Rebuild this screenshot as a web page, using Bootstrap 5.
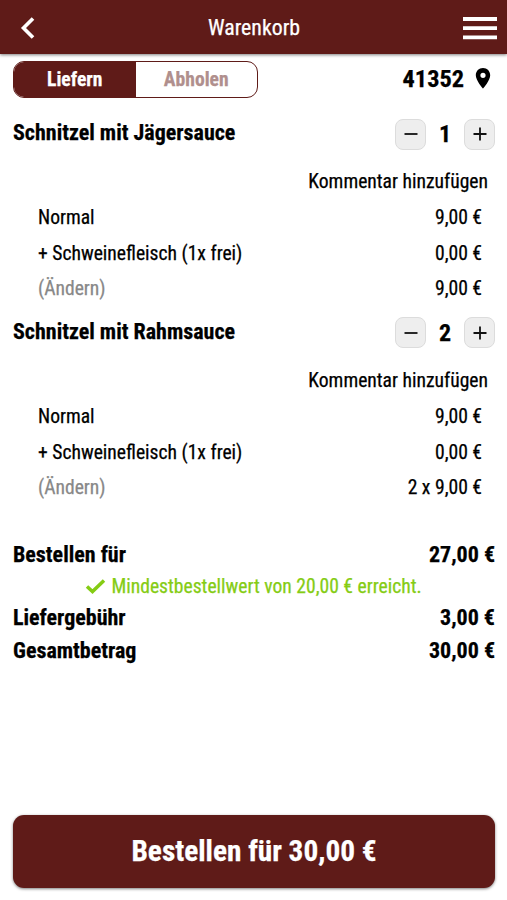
<!DOCTYPE html>
<html lang="de">
<head>
<meta charset="utf-8">
<meta name="viewport" content="width=device-width, initial-scale=1">
<title>Warenkorb</title>
<link href="https://cdn.jsdelivr.net/npm/bootstrap@5.3.0/dist/css/bootstrap.min.css" rel="stylesheet">
<style>
:root{--wine:#5f1b18}
body{font-family:"Roboto Condensed",Roboto,"Liberation Sans",sans-serif;font-stretch:75%;font-size:19.6px;line-height:24px;color:#000;background:#fff;min-height:900px;-webkit-text-stroke:.25px currentColor}
.topbar{height:54px;background:var(--wine);color:#fff;box-shadow:0 1px 3px rgba(0,0,0,.5);padding:1px 10px 0 20px}
.topbar-title{font-size:21.8px;padding:1px 0 0 9px}
.mode-bar{height:53px;padding:0 14px 3px 13px}
.mode-switch{width:245px;height:37px;border:1px solid var(--wine);border-radius:11px;overflow:hidden;font-weight:700}
.mode-on,.mode-off{padding-top:2px}
.mode-on{background:var(--wine);color:#fff}
.mode-off{color:#b08f8d}
.postcode{font-size:24.3px;font-weight:700}
.item-head{height:56px;padding:0 12px 2px 13px;font-weight:700;font-size:22px}
.item-name{padding-bottom:2px}
.qty-btn{width:31px;height:31px;border:1px solid #dcdcdc;border-radius:8px;background:#eee;padding:0}
.qty{width:38px;font-size:24px}
.comment-row{height:36px;padding:2px 19px 0 0}
.opt-row{height:35.6px;padding:3px 25px 0 38px}
.change{color:#888}
.sums{padding-top:34px}
.sum-row{padding:0 12px 0 13px;font-size:22px;font-weight:700;height:33px}
.min-ok{color:#85cc14;height:30px}
.order-btn{height:73px;border-radius:11px;background:var(--wine);color:#fff;font-size:29.3px;font-weight:700;margin:0 12px 12px 13px;box-shadow:0 1px 3px rgba(0,0,0,.5);padding:0}
.order-btn:hover{background:var(--wine);color:#fff}
</style>
</head>
<body class="d-flex flex-column">
<header class="topbar d-flex align-items-center justify-content-between">
  <svg width="16" height="24" viewBox="0 0 16 24"><path d="M13 2.500 3.500 12 13 21.500" fill="none" stroke="#fff" stroke-width="3.600"/></svg>
  <span class="topbar-title">Warenkorb</span>
  <svg width="34" height="24" viewBox="0 0 34 24"><path d="M0 3h34M0 12.200h34M0 21.300h34" stroke="#fff" stroke-width="3.800"/></svg>
</header>
<main class="d-flex flex-column flex-grow-1">
  <div class="mode-bar d-flex align-items-center justify-content-between">
    <div class="mode-switch d-flex text-center">
      <div class="mode-on w-50 d-flex align-items-center justify-content-center"><span>Liefern</span></div>
      <div class="mode-off w-50 d-flex align-items-center justify-content-center"><span>Abholen</span></div>
    </div>
    <div class="postcode d-flex align-items-center"><span>41352</span>
      <svg class="ms-2" width="21" height="24" viewBox="0 0 21 24"><path fill="#000" fill-rule="evenodd" d="M11 1C6.800 1 3.800 4.200 3.800 8.200 3.800 13.600 11 21.500 11 21.500s7.200-7.900 7.200-13.300C18.200 4.200 15.200 1 11 1Zm0 4.700a2.600 2.600 0 1 1 0 5.200 2.600 2.600 0 0 1 0-5.200Z"/></svg>
    </div>
  </div>

  <section>
    <div class="item-head d-flex align-items-center justify-content-between">
      <span class="item-name">Schnitzel mit Jägersauce</span>
      <div class="d-flex align-items-center">
        <button class="qty-btn d-flex align-items-center justify-content-center" aria-label="Weniger"><svg width="14" height="14" viewBox="0 0 14 14"><path d="M.5 7h13" stroke="#111" stroke-width="1.800"/></svg></button>
        <span class="qty text-center">1</span>
        <button class="qty-btn d-flex align-items-center justify-content-center" aria-label="Mehr"><svg width="14" height="14" viewBox="0 0 14 14"><path d="M.5 7h13M7 .5v13" stroke="#111" stroke-width="1.800"/></svg></button>
      </div>
    </div>
    <div class="comment-row d-flex align-items-center justify-content-end"><span>Kommentar hinzufügen</span></div>
    <div class="opt-row d-flex align-items-center justify-content-between"><span>Normal</span><span>9,00 €</span></div>
    <div class="opt-row d-flex align-items-center justify-content-between"><span>+ Schweinefleisch (1x frei)</span><span>0,00 €</span></div>
    <div class="opt-row d-flex align-items-center justify-content-between"><span class="change">(Ändern)</span><span>9,00 €</span></div>
  </section>

  <section>
    <div class="item-head d-flex align-items-center justify-content-between">
      <span class="item-name">Schnitzel mit Rahmsauce</span>
      <div class="d-flex align-items-center">
        <button class="qty-btn d-flex align-items-center justify-content-center" aria-label="Weniger"><svg width="14" height="14" viewBox="0 0 14 14"><path d="M.5 7h13" stroke="#111" stroke-width="1.800"/></svg></button>
        <span class="qty text-center">2</span>
        <button class="qty-btn d-flex align-items-center justify-content-center" aria-label="Mehr"><svg width="14" height="14" viewBox="0 0 14 14"><path d="M.5 7h13M7 .5v13" stroke="#111" stroke-width="1.800"/></svg></button>
      </div>
    </div>
    <div class="comment-row d-flex align-items-center justify-content-end"><span>Kommentar hinzufügen</span></div>
    <div class="opt-row d-flex align-items-center justify-content-between"><span>Normal</span><span>9,00 €</span></div>
    <div class="opt-row d-flex align-items-center justify-content-between"><span>+ Schweinefleisch (1x frei)</span><span>0,00 €</span></div>
    <div class="opt-row d-flex align-items-center justify-content-between"><span class="change">(Ändern)</span><span>2 x 9,00 €</span></div>
  </section>

  <section class="sums flex-grow-1">
    <div class="sum-row d-flex align-items-center justify-content-between"><span>Bestellen für</span><span>27,00 €</span></div>
    <div class="min-ok d-flex align-items-center justify-content-center"><svg class="me-1" width="22" height="18" viewBox="0 0 22 18"><path d="m2 8.500 5.500 5L19 2.500" fill="none" stroke="currentColor" stroke-width="3.500"/></svg><span>Mindestbestellwert von 20,00 € erreicht.</span></div>
    <div class="sum-row d-flex align-items-center justify-content-between"><span>Liefergebühr</span><span>3,00 €</span></div>
    <div class="sum-row d-flex align-items-center justify-content-between"><span>Gesamtbetrag</span><span>30,00 €</span></div>
  </section>
  <button class="btn order-btn">Bestellen für 30,00 €</button>
</main>
<script src="https://cdn.jsdelivr.net/npm/bootstrap@5.3.0/dist/js/bootstrap.bundle.min.js"></script>
</body>
</html>
